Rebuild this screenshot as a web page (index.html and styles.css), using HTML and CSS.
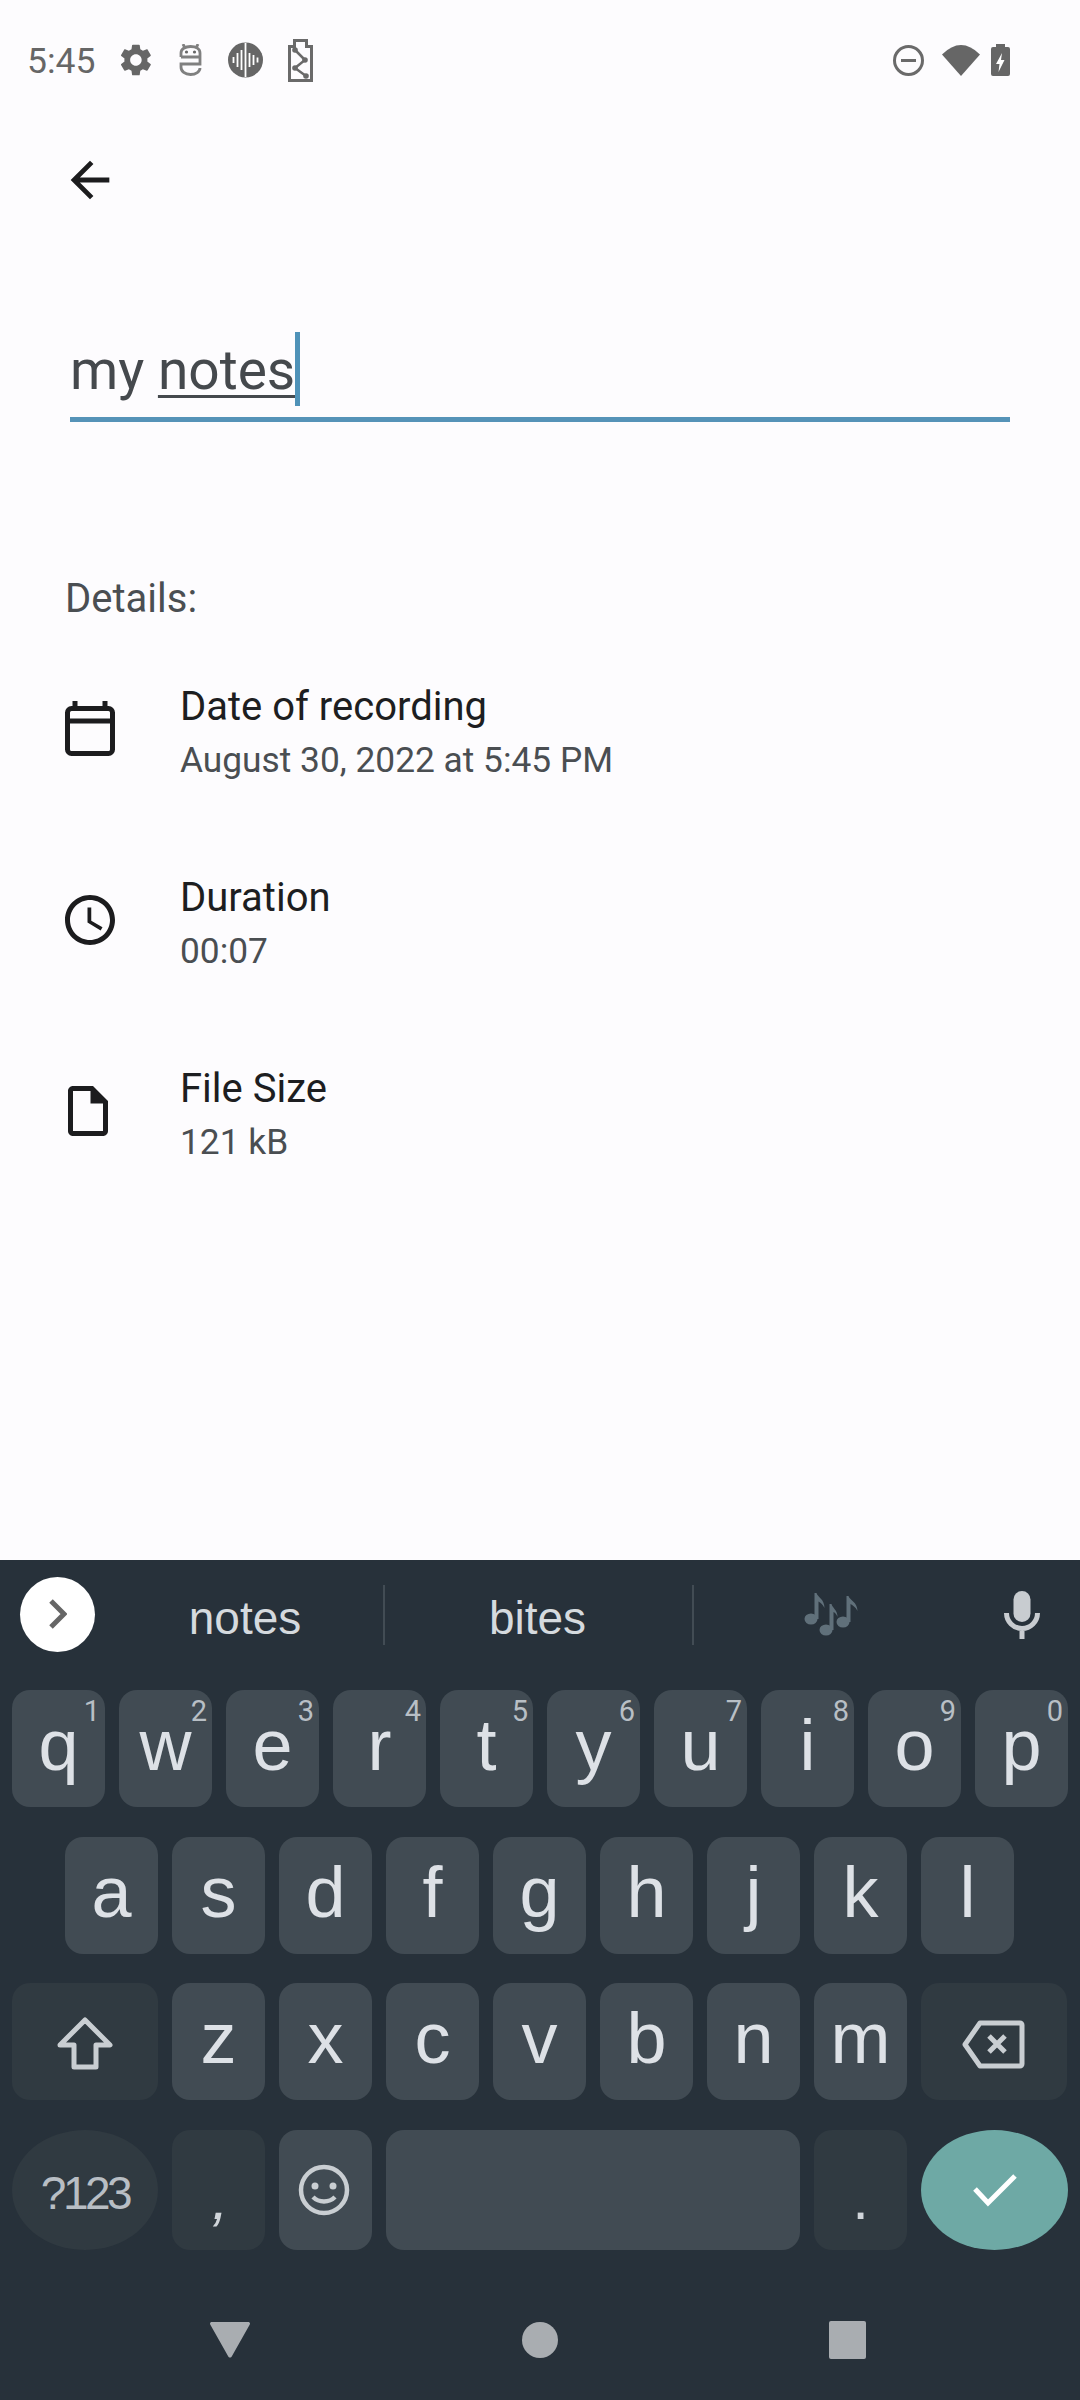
FILE: index.html
```html
<!DOCTYPE html>
<html>
	<head>
		<meta charset="utf-8">
		<title>Recording details</title>
		<link rel="stylesheet" href="styles.css">
	</head>

	<body>
		<div class="status">
			<span class="time">5:45</span>
			<svg width="33" height="32" viewBox="3 2 20 20"><path class="grey" d="M19.14 12.94c.04-.3.06-.61.06-.94 0-.32-.02-.64-.07-.94l2.03-1.58c.18-.14.23-.41.12-.61l-1.92-3.32c-.12-.22-.37-.29-.59-.22l-2.39.96c-.5-.38-1.03-.7-1.62-.94l-.36-2.54c-.04-.24-.24-.41-.48-.41h-3.84c-.24 0-.43.17-.47.41l-.36 2.54c-.59.24-1.13.57-1.62.94l-2.39-.96c-.22-.08-.47 0-.59.22L2.74 8.87c-.12.21-.08.47.12.61l2.03 1.58c-.05.3-.09.63-.09.94s.02.64.07.94l-2.03 1.58c-.18.14-.23.41-.12.61l1.92 3.32c.12.22.37.29.59.22l2.39-.96c.5.38 1.03.7 1.62.94l.36 2.54c.05.24.24.41.48.41h3.84c.24 0 .44-.17.47-.41l.36-2.54c.59-.24 1.13-.56 1.62-.94l2.39.96c.22.08.47 0 .59-.22l1.92-3.32c.12-.22.07-.47-.12-.61l-2.01-1.58zM12 15.6c-1.98 0-3.6-1.62-3.6-3.6s1.62-3.6 3.6-3.6 3.6 1.62 3.6 3.6-1.62 3.6-3.6 3.6z"/></svg>
			<svg width="24" height="32" viewBox="0 0 24 32" fill="none" stroke="#808080" stroke-width="2.800"><path d="M4 0l2 4M19 0l-2 4"/><path d="M2 13V9c0-4 4-6.500 9.500-6.500S21 5 21 9v11H2v3c0 4.500 4 7.500 9.500 7.500S21 27.500 21 24M2 13h19"/><circle class="grey" stroke="none" cx="7.500" cy="8" r="1.600"/><circle class="grey" stroke="none" cx="15.500" cy="8" r="1.600"/></svg>
			<svg width="35" height="36" viewBox="0 0 35 36"><circle class="grey" cx="17.500" cy="18" r="17.500"/><path d="M17.500 1v34M13.500 8v20M21.500 11v14M9.500 11v14M25.500 13v10M5.500 15v6M29.500 15.500v5" stroke="#fff" stroke-width="1.800"/></svg>
			<svg width="26" height="43" viewBox="0 0 26 43" fill="none" stroke="#6a6a6a"><path stroke-width="3" d="M1.500 41.500V7.500h5V1.500h12v6h5v34z"/><path stroke-width="2.500" d="M7 11l10 10-10 8 11 8"/><g fill="#6a6a6a" stroke="none"><circle cx="7" cy="11" r="2.800"/><circle cx="17" cy="21" r="2.800"/><circle cx="7" cy="29" r="2.800"/><circle cx="18" cy="37" r="2.800"/></g></svg>
			<div class="status-right">
				<svg width="31" height="31" viewBox="0 0 31 31" fill="none" stroke="#6a6a6a" stroke-width="3"><circle cx="15.500" cy="15.500" r="14"/><path d="M8 15.500h15"/></svg>
				<svg width="38" height="31" viewBox="0 0 38 31"><path class="grey" d="M0 9.500Q19-9.500 38 9.500L19 31z"/></svg>
				<svg width="19" height="32" viewBox="0 0 19 32"><path class="grey" d="M5 0h9v3h3a2 2 0 0 1 2 2v25a2 2 0 0 1-2 2H2a2 2 0 0 1-2-2V5a2 2 0 0 1 2-2h3z"/><path fill="#fff" d="M11 9 5 20h3.500l-1 8 6-12H10z"/></svg>
			</div>
		</div>

		<div class="toolbar">
			<svg width="58" height="58" viewBox="0 0 24 24"><path fill="#1c1c1e" d="M20 11H7.830l5.590-5.590L12 4l-8 8 8 8 1.410-1.410L7.830 13H20v-2z"/></svg>
		</div>

		<div class="field">
			<span class="field-text">my <u>notes</u><i class="caret"></i></span>
		</div>

		<h4 class="section">Details:</h4>

		<div class="rows">
			<div class="row">
				<svg width="60" height="60" viewBox="0 0 60 60" fill="none" stroke="#1c1c1e" stroke-width="5"><rect x="7.500" y="9.500" width="45" height="45" rx="4"/><path d="M7.500 22h45M15 2v7M45 2v7"/></svg>
				<div>
					<div class="row-title">Date of recording</div>
					<div class="row-sub">August 30, 2022 at 5:45 PM</div>
				</div>
			</div>
			<div class="row">
				<svg width="60" height="60" viewBox="0 0 24 24"><path class="ink" d="M11.990 2C6.470 2 2 6.480 2 12s4.470 10 9.990 10C17.520 22 22 17.520 22 12S17.520 2 11.990 2zM12 20c-4.420 0-8-3.580-8-8s3.580-8 8-8 8 3.580 8 8-3.580 8-8 8z"/><path class="ink" d="M12.500 7H11v6l5.250 3.150.75-1.230-4.500-2.670z"/></svg>
				<div>
					<div class="row-title">Duration</div>
					<div class="row-sub">00:07</div>
				</div>
			</div>
			<div class="row">
				<svg width="60" height="60" viewBox="0.8 0 24 24"><path class="ink" d="M14 2H6c-1.100 0-2 .9-2 2v16c0 1.100.9 2 2 2h12c1.100 0 2-.9 2-2V8l-6-6zM6 20V4h7v5h5v11H6z"/></svg>
				<div>
					<div class="row-title">File Size</div>
					<div class="row-sub">121 kB</div>
				</div>
			</div>
		</div>

		<div class="keyboard">
			<div class="strip">
				<div class="strip-toggle">
					<svg width="18" height="30" viewBox="0 0 18 30" fill="none" stroke="#666" stroke-width="5"><path d="M2 2l13 13L2 28"/></svg>
				</div>
				<span class="word word-first">notes</span>
				<span class="divider"></span>
				<span class="word word-second">bites</span>
				<span class="divider"></span>
				<div class="strip-music">
					<svg width="54" height="44" viewBox="0 0 54 44" fill="#60707a"><ellipse cx="7" cy="26" rx="6.500" ry="5.500"/><path d="M10.500 26V0h2c1 4 8 6 8 15-2-4-4-5.500-6-6.500V26z"/><ellipse cx="22" cy="37" rx="6.500" ry="5.500"/><path d="M25.500 37V11h2c1 4 6 6 6 13-1-3-3-4.500-4-5v18z"/><ellipse cx="39" cy="29" rx="6.500" ry="5.500"/><path d="M42.500 29V3h2c1 4 9 6 9 15-2-4-5-6-7-7v18z"/></svg>
				</div>
				<svg class="mic" width="36" height="48" viewBox="0 0 36 48"><rect x="9.500" width="17" height="31" rx="8.500" fill="#c8ccd0"/><path d="M2.500 22a15.500 15.500 0 0 0 31 0M18 37v11" fill="none" stroke="#c8ccd0" stroke-width="5"/></svg>
			</div>

			<div class="keys">
				<div class="key-row">
					<div class="key">q<span class="hint">1</span></div>
					<div class="key">w<span class="hint">2</span></div>
					<div class="key">e<span class="hint">3</span></div>
					<div class="key">r<span class="hint">4</span></div>
					<div class="key">t<span class="hint">5</span></div>
					<div class="key">y<span class="hint">6</span></div>
					<div class="key">u<span class="hint">7</span></div>
					<div class="key">i<span class="hint">8</span></div>
					<div class="key">o<span class="hint">9</span></div>
					<div class="key">p<span class="hint">0</span></div>
				</div>
				<div class="key-row key-row-home">
					<div class="key">a</div>
					<div class="key">s</div>
					<div class="key">d</div>
					<div class="key">f</div>
					<div class="key">g</div>
					<div class="key">h</div>
					<div class="key">j</div>
					<div class="key">k</div>
					<div class="key">l</div>
				</div>
				<div class="key-row">
					<div class="key key-wide key-fn">
						<svg width="56" height="53" viewBox="0 0 56 53" fill="none" stroke="#c9ced2" stroke-width="5" stroke-linejoin="round"><path d="M28 3l25 25H39v22H17V28H3z"/></svg>
					</div>
					<div class="key">z</div>
					<div class="key">x</div>
					<div class="key">c</div>
					<div class="key">v</div>
					<div class="key">b</div>
					<div class="key">n</div>
					<div class="key">m</div>
					<div class="key key-wide key-fn">
						<svg class="key-delete" width="63" height="49" viewBox="0 0 63 49" fill="none" stroke="#c9ced2" stroke-width="5" stroke-linejoin="round"><path d="M18 3h40a2 2 0 0 1 2 2v39a2 2 0 0 1-2 2H18L3 24.500z"/><path d="M27 16l16 16M43 16L27 32"/></svg>
					</div>
				</div>
				<div class="key-row key-row-bottom">
					<div class="key key-wide key-fn key-round symbols">?123</div>
					<div class="key key-fn key-punct key-comma">,</div>
					<div class="key-fn-light">
						<svg width="52" height="52" viewBox="0 0 52 52" fill="none" stroke="#c9ced2" stroke-width="4.500"><circle cx="26" cy="26" r="23"/><path d="M15 33c6 6 16 6 22 0"/><circle cx="17" cy="22" r="3.500" fill="#c9ced2" stroke="none"/><circle cx="35" cy="22" r="3.500" fill="#c9ced2" stroke="none"/></svg>
					</div>
					<div class="key key-space"></div>
					<div class="key key-fn key-punct">.</div>
					<div class="key key-wide key-round key-enter">
						<svg width="44" height="34" viewBox="0 0 44 34" fill="none" stroke="#fff" stroke-width="5"><path d="M2 16l13 14L42 3"/></svg>
					</div>
				</div>
			</div>

			<div class="nav">
				<svg class="nav-back" width="40" height="36" viewBox="0 0 40 36"><path fill="#a9adb1" d="M2 0h36c2 0 2.500 1.500 1.500 3L22 34c-1 2-3 2-4 0L.5 3C-.5 1.500 0 0 2 0z"/></svg>
				<span class="nav-home"></span>
				<span class="nav-recent"></span>
			</div>
		</div>
	</body>
</html>
```

FILE: styles.css
```css
body {
	margin: 0;
	width: 1080px;
	height: 2400px;
	overflow: hidden;
	background: #fdfcfe;
	font-family: Roboto, sans-serif;
	display: flex;
	flex-direction: column;
}

svg {
	display: block;
	flex: none;
}

.grey {
	fill: #666;
}

.ink {
	fill: #1c1c1e;
}

/* status bar */
.status {
	height: 120px;
	padding: 0 70px 0 27px;
	display: flex;
	align-items: center;
	gap: 25px;
}

.time {
	width: 68.5px;
	padding-top: 2px;
	font-size: 35.5px;
	color: #666;
}

.status-right {
	margin-left: auto;
	display: flex;
	align-items: center;
	gap: 18px;
}

.status-right svg:last-child {
	margin-left: -7px;
}

.toolbar {
	height: 120px;
	padding-left: 61px;
	display: flex;
	align-items: center;
}

/* name field */
.field {
	margin: 92px 70px 0;
	padding-bottom: 9px;
	border-bottom: 5px solid #5593b8;
	font-size: 55px;
	line-height: 76px;
	color: #45494d;
}

.field-text {
	position: relative;
}

.field-text u {
	text-decoration-thickness: 3px;
	text-underline-offset: 6px;
}

.caret {
	position: absolute;
	right: -5px;
	top: -6px;
	width: 5px;
	height: 74px;
	background: #4f92b8;
}

.section {
	margin: 152px 0 0 65px;
	font-size: 40px;
	line-height: 50px;
	font-weight: 400;
	color: #4a4e52;
}

/* detail rows */
.rows {
	margin-top: 54px;
	display: flex;
	flex-direction: column;
	gap: 86px;
	padding-left: 60px;
}

.row {
	display: flex;
	align-items: center;
	gap: 60px;
}

.row svg {
	margin-top: -4px;
}

.row-title {
	margin-top: 1.5px;
	font-size: 40px;
	line-height: 54px;
	color: #1d1e21;
}

.row-sub {
	margin-top: 3.5px;
	font-size: 35.3px;
	line-height: 46px;
	color: #4a4e52;
}

/* keyboard */
.keyboard {
	margin-top: auto;
	height: 840px;
	background: #27313a;
	display: flex;
	flex-direction: column;
}

.strip {
	height: 110px;
	margin-bottom: 20px;
	padding-left: 20px;
	display: flex;
	align-items: center;
}

.strip-toggle {
	width: 75px;
	height: 75px;
	border-radius: 50%;
	background: #fff;
	display: flex;
	align-items: center;
	justify-content: center;
	margin-top: -2px;
}

.word {
	font-family: "Liberation Sans", sans-serif;
	font-size: 46px;
	line-height: 50px;
	padding-top: 6px;
	text-align: center;
	color: #d5dade;
}

.word-first {
	width: 276px;
	margin-left: 12px;
}

.word-second {
	width: 307px;
	text-indent: -2px;
}

.divider {
	width: 2px;
	height: 60px;
	background: #424c54;
}

.strip-music {
	width: 274px;
	display: flex;
	justify-content: center;
}

.mic {
	margin-left: 36px;
}

.keys {
	display: flex;
	flex-direction: column;
	gap: 29.5px;
}

.key-row {
	height: 117px;
	padding: 0 12px;
	display: flex;
	gap: 14px;
}

.key-row-home {
	padding-left: 65px;
}

.key-row-bottom {
	height: 120px;
}

.key {
	position: relative;
	box-sizing: border-box;
	width: 93px;
	border-radius: 18px;
	background: #414b53;
	padding-top: 17px;
	font-family: "Liberation Sans", sans-serif;
	font-size: 72px;
	line-height: 76px;
	text-align: center;
	color: #dde1e6;
}

.hint {
	position: absolute;
	top: 7px;
	right: 5px;
	font-family: Roboto, sans-serif;
	font-size: 29px;
	line-height: 29px;
	color: #b8bfc5;
}

.key-wide {
	width: 146px;
}

.key-wide svg {
	margin: 17px auto 0;
}

.key-wide .key-delete {
	margin-top: 20px;
	transform: translateX(-1px);
}

.key-fn {
	background: #303a41;
}

.key-fn-light {
	box-sizing: border-box;
	width: 93px;
	padding: 34px 0 0 19px;
	border-radius: 18px;
	background: #414b53;
}

.key-space {
	width: 414px;
}

.key-round {
	border-radius: 50% / 50%;
}

.symbols {
	padding-top: 25px;
	font-size: 46px;
	letter-spacing: -3.5px;
	color: #b8bec4;
}

.key-punct {
	padding-top: 31px;
	font-size: 60px;
	color: #d0d5da;
}

.key-comma {
	font-style: italic;
	text-indent: 3px;
}

.key-enter {
	width: 147px;
	background: #6ea9a5;
}

.key-wide.key-enter svg {
	margin-top: 26px;
}

/* navigation bar */
.nav {
	flex: 1;
	padding: 30px 214px 0 210px;
	display: flex;
	align-items: center;
	justify-content: space-between;
}

.nav-home {
	width: 36px;
	height: 36px;
	border-radius: 50%;
	background: #a9adb1;
}

.nav-recent {
	width: 37px;
	height: 38px;
	border-radius: 2px;
	background: #a9adb1;
}
```
